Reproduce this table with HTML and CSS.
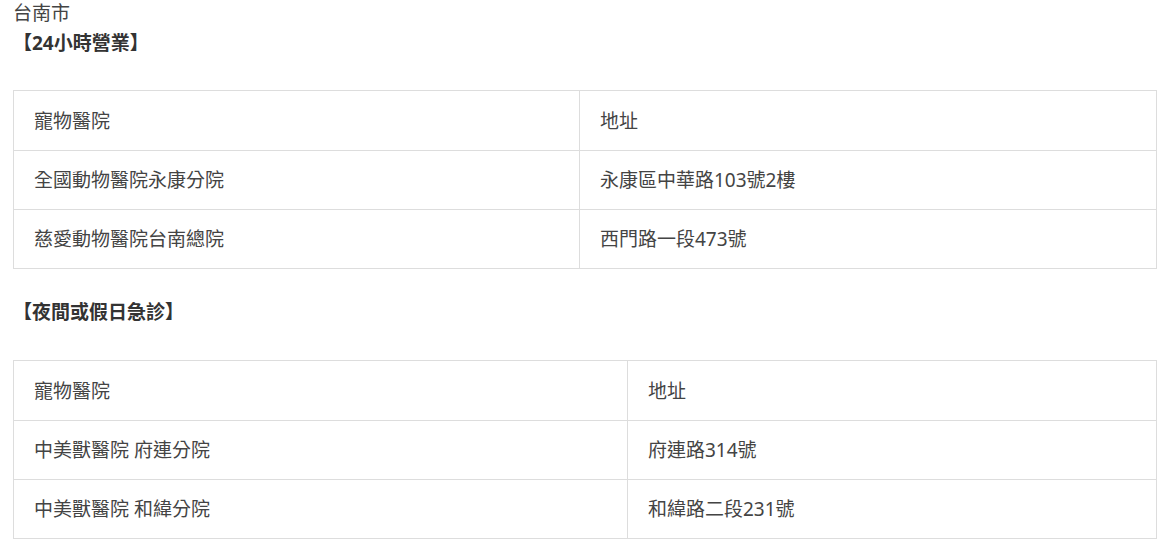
FILE: index.html
```html
<!DOCTYPE html>
<html lang="zh-Hant">
<head>
<meta charset="utf-8">
<title>台南市</title>
<link rel="stylesheet" href="styles.css">
</head>
<body>
<div class="page">
  <p class="city">台南市</p>
  <h3 class="section-title">【24小時營業】</h3>
  <table class="list list-a">
    <colgroup><col class="col-a1"><col></colgroup>
    <tr class="head-row"><td>寵物醫院</td><td>地址</td></tr>
    <tr><td>全國動物醫院永康分院</td><td>永康區中華路103號2樓</td></tr>
    <tr><td>慈愛動物醫院台南總院</td><td>西門路一段473號</td></tr>
  </table>
  <h3 class="section-title second">【夜間或假日急診】</h3>
  <table class="list list-b">
    <colgroup><col class="col-b1"><col></colgroup>
    <tr class="head-row"><td>寵物醫院</td><td>地址</td></tr>
    <tr><td>中美獸醫院 府連分院</td><td>府連路314號</td></tr>
    <tr><td>中美獸醫院 和緯分院</td><td>和緯路二段231號</td></tr>
  </table>
</div>
</body>
</html>
```

FILE: styles.css
```css
html, body {
  margin: 0;
  padding: 0;
  background: #fff;
}
body {
  font-family: "Noto Sans", "Noto Sans CJK TC", sans-serif;
  font-size: 19px;
  color: #444;
}
.page {
  padding: 1px 12px 0 13px;
}
.city {
  margin: 0;
  line-height: 25px;
}
.section-title {
  margin: 5px 0 0;
  font-size: 19px;
  font-weight: 700;
  line-height: 25px;
  color: #333;
}
.section-title + .list {
  margin-top: 34px;
}
.section-title.second {
  margin-top: 31px;
}
.section-title.second + .list {
  margin-top: 35px;
}
.list {
  width: 100%;
  border-collapse: collapse;
  border: 1px solid #ddd;
}
.list td {
  border: 1px solid #ddd;
  padding: 15px 20px;
  line-height: 28px;
  text-align: left;
  vertical-align: middle;
}
.list .head-row td {
  padding-top: 16px;
}
.col-a1 {
  width: 566px;
}
.col-b1 {
  width: 614px;
}
```
